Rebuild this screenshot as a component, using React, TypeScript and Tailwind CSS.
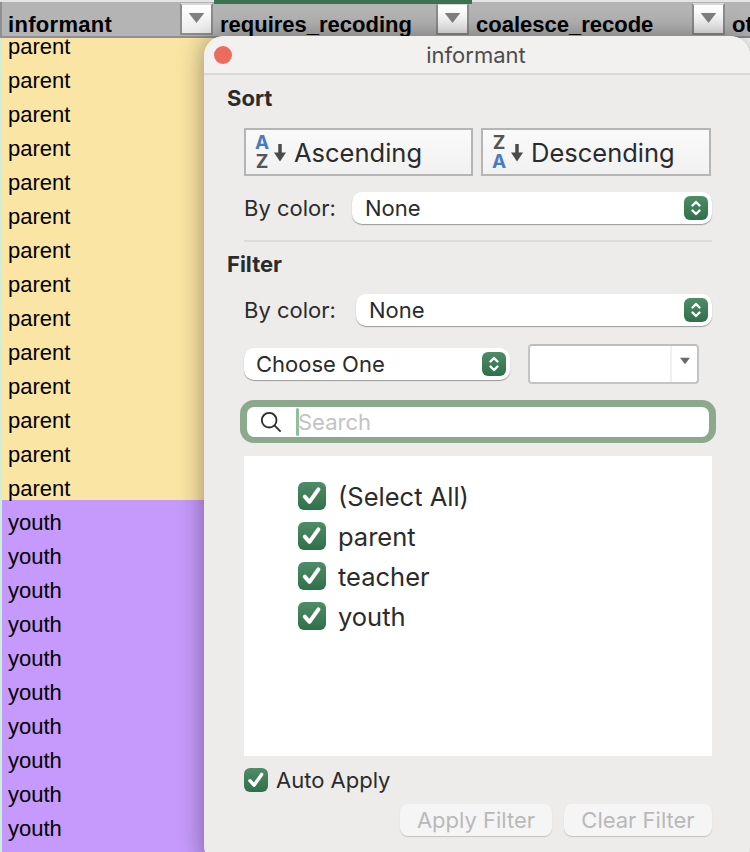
const rows = [...Array(14).fill("parent"), ...Array(10).fill("youth"), ""];
const columns = [
  { name: "informant", width: "w-[214px]", button: true },
  { name: "requires_recoding", width: "w-[256px]", button: true },
  { name: "coalesce_recode", width: "w-[256px]", button: true },
  { name: "other", width: "w-[60px]", button: false },
];
const listItems = ["(Select All)", "parent", "teacher", "youth"];

const ui = { fontFamily: "Inter, 'Noto Sans', sans-serif" };

const Triangle = ({ className }: { className: string }) => (
  <svg viewBox="0 0 14 9" className={className}>
    <path d="M0 0h14L7 9z" fill="currentColor" />
  </svg>
);

const Stepper = () => (
  <span className="flex h-6 w-6 shrink-0 items-center justify-center rounded-[6px] bg-gradient-to-b from-[#4f8c68] to-[#2f7049]">
    <svg viewBox="0 0 24 24" className="h-6 w-6" fill="none" stroke="white" strokeWidth="2.4" strokeLinecap="round" strokeLinejoin="round">
      <path d="M8.5 9.5 12 6l3.5 3.5M8.5 14.5 12 18l3.5-3.5" />
    </svg>
  </span>
);

const Check = ({ size }: { size: string }) => (
  <span className={`flex shrink-0 items-center justify-center rounded-[6px] bg-gradient-to-b from-[#4f8c68] to-[#2f7049] ${size}`}>
    <svg viewBox="0 0 24 24" className="h-[90%] w-[90%]" fill="none" stroke="white" strokeWidth="3.8" strokeLinecap="round" strokeLinejoin="round">
      <path d="M5.5 13 10 18l8.5-12" />
    </svg>
  </span>
);

const Select = ({ label, className }: { label: string; className: string }) => (
  <div className={`flex items-center justify-between rounded-[10px] bg-white pl-[13px] pr-1 shadow-[0_1px_1px_rgba(0,0,0,0.35)] ${className}`}>
    <span className="text-[22px] leading-[28px] text-[#2b2b2b]">{label}</span>
    <Stepper />
  </div>
);

const SortButton = ({ top, bottom, label, topBlue }: { top: string; bottom: string; label: string; topBlue: boolean }) => (
  <button className="flex h-12 items-center border-2 border-[#b5b5b5] bg-gradient-to-b from-[#fafafa] to-[#f1f1f1] pl-[9px]">
    <span className="flex w-[14px] flex-col items-center text-[19px] font-bold leading-[19px]">
      <span className={topBlue ? "text-[#4a7bc0]" : "text-[#555555]"}>{top}</span>
      <span className={topBlue ? "text-[#555555]" : "text-[#4a7bc0]"}>{bottom}</span>
    </span>
    <svg viewBox="0 0 12 19" className="ml-[5px] h-[19px] w-[12px] text-[#4a4a4a]">
      <path d="M6 1v11" stroke="currentColor" strokeWidth="3.5" />
      <path d="M0 9.5h12l-6 9z" fill="currentColor" />
    </svg>
    <span className="ml-[8px] mt-[1px] text-[25.5px] leading-[32px] text-[#2b2b2b]">{label}</span>
  </button>
);

const FooterButton = ({ label, width }: { label: string; width: string }) => (
  <button className={`h-8 rounded-[8px] bg-[#f5f5f5] text-[22px] leading-[28px] text-[#b9b9b9] shadow-[0_1px_1px_rgba(0,0,0,0.18)] ${width}`}>
    {label}
  </button>
);

export default function App() {
  return (
    <div className="relative h-[852px] w-[750px] overflow-hidden bg-white" style={{ fontFamily: "'Liberation Sans', Arial, sans-serif" }}>
      <header className="relative z-20 flex h-[38px] border-t-2 border-b-2 border-t-[#e4e4e4] border-b-[#8f8f8f] bg-[#b4b4b4]">
        {columns.map((col, i) => (
          <div key={col.name} className={`relative flex shrink-0 items-end justify-between pl-[6px] ${col.width} ${i === 0 ? "border-l-2 border-[#8f8f8f]" : ""}`}>
            {i === 1 && <div className="absolute -top-[2px] left-0 h-1 w-[258px] bg-[#3a7350]" />}
            <span className={`text-[22px] leading-[22px] font-bold whitespace-nowrap text-black ${i === 0 ? "tracking-[0.3px]" : ""}`}>{col.name}</span>
            {col.button && (
              <span className="mb-[1px] mr-[1px] flex h-8 w-[33px] shrink-0 justify-center border-2 border-[#8c8c8c] border-t-[#d8d8d8] bg-gradient-to-b from-[#ffffff] to-[#ececec] pt-[8px]">
                <Triangle className="h-[10px] w-[19px] text-[#808080]" />
              </span>
            )}
          </div>
        ))}
      </header>

      <div className="-mt-[14px] w-[214px] border-l-2 border-[#cdeedd]">
        {rows.map((value, i) => (
          <div key={i} className={`flex h-[34px] items-end pl-[6px] text-[22px] leading-[22px] text-black ${value === "parent" ? "bg-[#fae5a4]" : "bg-[#c59afc]"}`}>
            {value}
          </div>
        ))}
      </div>

      <section className="absolute top-[36px] left-[204px] z-30 h-[830px] w-[546px] rounded-[20px] bg-[#edecea] shadow-[0_0_26px_rgba(0,0,0,0.4)]" style={ui}>
        <div className="relative flex h-[39px] items-center justify-center rounded-t-[20px] border-b-2 border-[#d8d8d6] bg-[#f2f1ef]">
          <span className="absolute left-[10px] h-[18px] w-[18px] rounded-full bg-[#ed6a5e]" />
          <span className="ml-[-2px] text-[22px] leading-[28px] text-[#4d4d4d]">informant</span>
        </div>

        <div className="pr-[38px] pl-[40px]">
          <h2 className="-ml-[17px] mt-[9px] text-[22px] leading-[28px] font-bold text-[#2b2b2b]">Sort</h2>
          <div className="mt-[16px] grid grid-cols-[229px_230px] gap-2">
            <SortButton top="A" bottom="Z" label="Ascending" topBlue />
            <SortButton top="Z" bottom="A" label="Descending" topBlue={false} />
          </div>
          <div className="mt-[16px] flex items-center">
            <span className="w-[108px] text-[22px] leading-[28px] text-[#2b2b2b]">By color:</span>
            <Select label="None" className="h-8 flex-1" />
          </div>
          <div className="mt-[16px] h-[2px] bg-[#dcdcdb]" />

          <h2 className="-ml-[17px] mt-[8px] text-[22px] leading-[28px] font-bold text-[#2b2b2b]">Filter</h2>
          <div className="mt-[16px] flex items-center">
            <span className="w-[112px] text-[22px] leading-[28px] text-[#2b2b2b]">By color:</span>
            <Select label="None" className="h-8 flex-1" />
          </div>

          <div className="mt-[18px] flex items-center">
            <Select label="Choose One" className="h-8 w-[266px] !pl-[12px]" />
            <div className="ml-[18px] flex h-10 w-[171px] overflow-hidden rounded-[4px] border-2 border-[#c4c4c4] border-t-[#bdbdbd] bg-white">
              <div className="flex-1" />
              <div className="flex w-[27px] justify-center border-l-2 border-[#f0f0f0] pt-[11px]">
                <Triangle className="h-[8px] w-[10px] text-[#6a6a6a]" />
              </div>
            </div>
          </div>

          <div className="-mx-1 mt-[16px] flex h-[43px] items-center rounded-[14px] border-[7px] border-b-[6px] border-[#8ca98e] bg-white pl-[13px]">
            <svg viewBox="0 0 24 24" className="h-[22px] w-[22px] text-[#2b2b2b]" fill="none" stroke="currentColor" strokeWidth="2">
              <circle cx="10" cy="10" r="8" />
              <path d="m16 16 6.5 6.5" />
            </svg>
            <span className="ml-[14px] h-[28px] w-[3px] rounded-sm bg-[#8fbfa0]" />
            <span className="-ml-[1px] text-[22px] leading-[28px] text-[#c3c3c3]">Search</span>
          </div>

          <div className="mt-[13px] flex h-[300px] flex-col gap-3 bg-white pt-[26px] pl-[54px]">
            {listItems.map((item) => (
              <label key={item} className="flex h-[28px] items-center gap-[12px]">
                <Check size="h-7 w-7" />
                <span className="mt-[2px] text-[25.5px] leading-[28px] text-[#2b2b2b]">{item}</span>
              </label>
            ))}
          </div>

          <label className="mt-[12px] flex h-6 items-center gap-[8px]">
            <Check size="h-6 w-6" />
            <span className="text-[22px] leading-[24px] text-[#2b2b2b]">Auto Apply</span>
          </label>

          <div className="mt-[12px] flex justify-end gap-3">
            <FooterButton label="Apply Filter" width="w-[152px]" />
            <FooterButton label="Clear Filter" width="w-[148px]" />
          </div>
        </div>
      </section>
    </div>
  );
}
